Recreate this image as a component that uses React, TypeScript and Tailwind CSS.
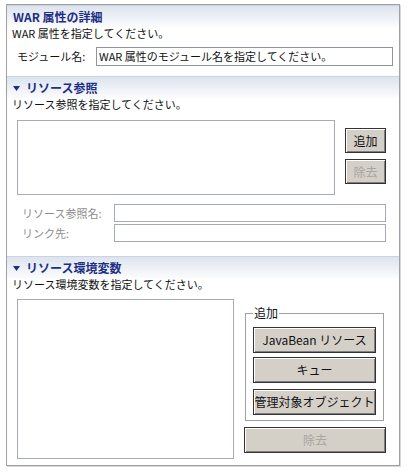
import type { ReactNode } from "react";

const FONT = { fontFamily: '"MS UI Gothic", "Noto Sans CJK JP", "Noto Sans", sans-serif' };

function SectionHeader({ title, arrow }: { title: string; arrow?: boolean }) {
  return (
    <div className="flex h-[22px] items-center border-t border-[#c9d3e1] bg-gradient-to-b from-[#dde4ee] to-[#fbfcfe] pl-[6px] text-[12px] font-bold text-[#1e2f86]">
      {arrow && (
        <svg width="7" height="5" viewBox="0 0 7 5" className="mr-[6px] mt-[1px]">
          <path d="M0 0h7L3.5 5z" fill="#1e2f86" />
        </svg>
      )}
      {title}
    </div>
  );
}

function Button({
  children,
  disabled,
  className,
}: {
  children: ReactNode;
  disabled?: boolean;
  className: string;
}) {
  return (
    <div
      className={`flex items-center justify-center border border-[#333] bg-[#d4d0c8] text-[12px] shadow-[inset_1px_1px_0_#fff,inset_-1px_-1px_0_#808080] ${
        disabled ? "text-[#a8a59e]" : "text-[#111]"
      } ${className}`}
    >
      {children}
    </div>
  );
}

function Field({ className }: { className: string }) {
  return <div className={`border border-[#a5acb5] bg-white ${className}`} />;
}

export default function App() {
  return (
    <div className="h-[472px] w-[408px] bg-white pl-[6px] pt-[4px] text-[11px] text-[#111]" style={FONT}>
      <div className="flex h-[462px] w-[394px] flex-col border border-[#a0a0a0] shadow-[1px_1px_0_#d8d8d8]">
        <SectionHeader title="WAR 属性の詳細" />
        <div className="pl-[5px] leading-[13px]">WAR 属性を指定してください。</div>
        <div className="mt-[7px] flex h-[19px] items-center">
          <span className="w-[89px] pl-[10px]">モジュール名:</span>
          <div className="flex h-[19px] w-[297px] items-center border border-[#8f959c] bg-white pl-[2px] leading-none">
            WAR 属性のモジュール名を指定してください。
          </div>
        </div>

        <div className="mt-[10px]">
          <SectionHeader title="リソース参照" arrow />
        </div>
        <div className="pl-[5px] leading-[13px]">リソース参照を指定してください。</div>
        <div className="mt-[9px] flex">
          <Field className="ml-[10px] h-[75px] w-[318px]" />
          <div className="ml-[10px] mt-[8px] flex flex-col gap-[6px]">
            <Button className="h-[25px] w-[41px]">追加</Button>
            <Button className="h-[25px] w-[41px]" disabled>
              除去
            </Button>
          </div>
        </div>
        <div className="mt-[9px] flex h-[18px] items-center text-[#8c8c8c]">
          <span className="w-[107px] pl-[15px]">リソース参照名:</span>
          <Field className="h-[18px] w-[272px]" />
        </div>
        <div className="mt-[2px] flex h-[18px] items-center text-[#8c8c8c]">
          <span className="w-[107px] pl-[15px]">リンク先:</span>
          <Field className="h-[18px] w-[272px]" />
        </div>

        <div className="mt-[14px]">
          <SectionHeader title="リソース環境変数" arrow />
        </div>
        <div className="pl-[5px] leading-[13px]">リソース環境変数を指定してください。</div>
        <div className="mt-[8px] flex">
          <Field className="ml-[10px] h-[160px] w-[217px]" />
          <div className="ml-[10px] flex flex-col">
            <div className="relative ml-[1px] mt-[14px] flex h-[108px] w-[139px] flex-col items-start border border-[#a0a0a0] pl-[7px] pt-[13px]">
              <span className="absolute left-[7px] top-[-8px] bg-white px-[1px] text-[12px] leading-[14px]">追加</span>
              <Button className="h-[26px] w-[123px]">JavaBean リソース</Button>
              <Button className="mt-[4px] h-[26px] w-[123px]">キュー</Button>
              <Button className="mt-[6px] h-[26px] w-[123px]">管理対象オブジェクト</Button>
            </div>
            <Button className="mt-[6px] h-[26px] w-[142px]" disabled>
              除去
            </Button>
          </div>
        </div>
      </div>
    </div>
  );
}
